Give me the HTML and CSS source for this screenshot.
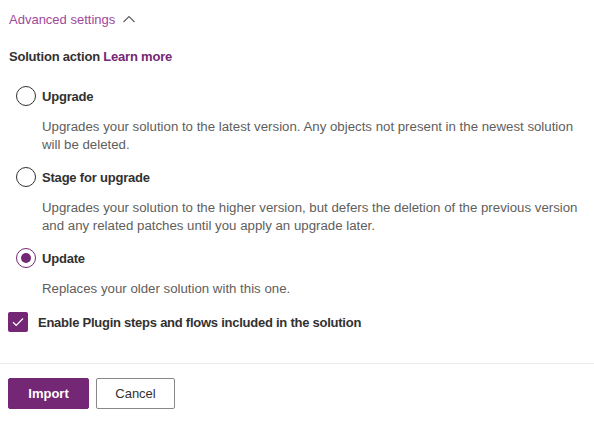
FILE: index.html
```html
<!DOCTYPE html>
<html>
<head>
<meta charset="utf-8">
<link rel="stylesheet" href="styles.css">
</head>
<body>
<div class="content">
  <div class="adv">
    <span>Advanced settings</span>
    <svg class="chev" width="12" height="8" viewBox="0 0 12 8"><path d="M0.5 7 L6 1.5 L11.5 7" fill="none" stroke="#605e5c" stroke-width="1.1"/></svg>
  </div>
  <div class="field-label">Solution action <a class="link">Learn more</a></div>

  <div class="options">
    <div class="option">
      <div class="radio-row"><span class="radio"></span><span class="radio-label">Upgrade</span></div>
      <div class="desc">Upgrades your solution to the latest version. Any objects not present in the newest solution will be deleted.</div>
    </div>
    <div class="option">
      <div class="radio-row"><span class="radio"></span><span class="radio-label">Stage for upgrade</span></div>
      <div class="desc">Upgrades your solution to the higher version, but defers the deletion of the previous version and any related patches until you apply an upgrade later.</div>
    </div>
    <div class="option">
      <div class="radio-row"><span class="radio checked"></span><span class="radio-label">Update</span></div>
      <div class="desc">Replaces your older solution with this one.</div>
    </div>
  </div>

  <div class="check-row">
    <span class="checkbox"><svg width="12" height="10" viewBox="0 0 12 10"><path d="M1 5.2 L4.2 8.3 L11 1.5" fill="none" stroke="#fff" stroke-width="1.2"/></svg></span>
    <span class="check-label">Enable Plugin steps and flows included in the solution</span>
  </div>
</div>
<div class="divider"></div>
<div class="footer">
  <button class="btn primary">Import</button>
  <button class="btn secondary">Cancel</button>
</div>
</body>
</html>
```
FILE: styles.css
```css
html, body {
  margin: 0;
  padding: 0;
  background: #fff;
}
body {
  font-family: "Liberation Sans", Arial, sans-serif;
  font-size: 13px;
  color: #323130;
}
.content {
  padding: 0 8px;
}
.adv {
  margin-top: 10px;
  padding-left: 1px;
  height: 20px;
  line-height: 20px;
  color: #a0479c;
  display: flex;
  align-items: center;
  gap: 8px;
}
.chev {
  margin-top: -3px;
}
.field-label {
  margin-top: 17px;
  padding-left: 1px;
  height: 20px;
  line-height: 20px;
  font-weight: 700;
  letter-spacing: -0.2px;
}
.link {
  color: #742774;
  font-weight: 700;
}
.options {
  margin-top: 19px;
  padding-left: 8px;
  display: flex;
  flex-direction: column;
  gap: 13px;
}
.radio-row {
  display: flex;
  align-items: center;
  gap: 6px;
  height: 20px;
}
.radio {
  box-sizing: border-box;
  width: 20px;
  height: 20px;
  border: 1px solid #323130;
  border-radius: 50%;
  display: flex;
  align-items: center;
  justify-content: center;
}
.radio.checked {
  border-color: #742774;
}
.radio.checked::after {
  content: "";
  width: 10px;
  height: 10px;
  border-radius: 50%;
  background: #742774;
}
.radio-label {
  font-weight: 700;
  letter-spacing: -0.2px;
}
.desc {
  margin-top: 12px;
  padding-left: 26px;
  font-size: 13.25px;
  line-height: 18px;
  color: #605e5c;
}
.check-row {
  margin-top: 14px;
  display: flex;
  align-items: center;
  gap: 10px;
  height: 20px;
}
.checkbox {
  width: 20px;
  height: 20px;
  border-radius: 2px;
  background: #742774;
  display: flex;
  align-items: center;
  justify-content: center;
}
.check-label {
  font-weight: 700;
  letter-spacing: -0.25px;
}
.divider {
  margin-top: 31px;
  height: 1px;
  background: #edebe9;
}
.footer {
  margin-top: 14px;
  padding: 0 8px;
  display: flex;
  gap: 7px;
}
.btn {
  box-sizing: border-box;
  height: 31px;
  font-family: inherit;
  font-size: 13px;
  font-weight: 700;
  border-radius: 2px;
  padding: 0;
}
.primary {
  background: #742774;
  border: 1px solid #742774;
  color: #fff;
  width: 81px;
}
.secondary {
  background: #fff;
  border: 1px solid #8a8886;
  color: #323130;
  width: 79px;
  font-weight: 400;
}
```
